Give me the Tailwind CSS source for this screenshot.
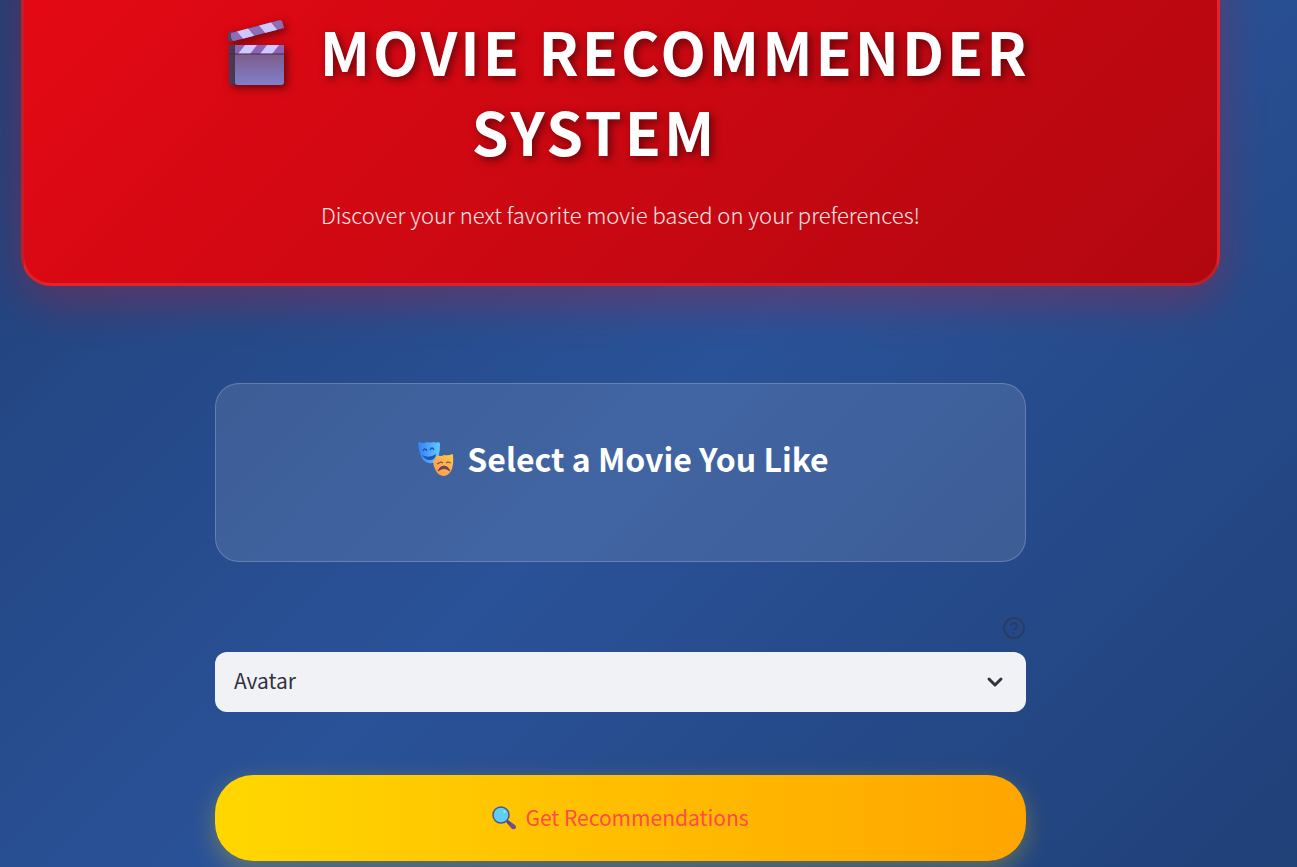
<!DOCTYPE html>
<html lang="en">
<head>
<meta charset="utf-8">
<meta name="viewport" content="width=device-width, initial-scale=1">
<title>Movie Recommender System</title>
<script src="https://cdn.jsdelivr.net/npm/@tailwindcss/browser@4"></script>
</head>
<body class="min-h-screen overflow-hidden bg-[linear-gradient(135deg,#204078_0%,#2a5298_50%,#204078_100%)] font-['Noto_Sans_CJK_SC','Open_Sans',sans-serif]">
<main class="flex min-h-screen flex-col items-center pr-[77px] pl-[21px]">
  <header class="-mt-[60px] w-full rounded-[30px] border-3 border-white/10 bg-[linear-gradient(135deg,#e50914_0%,#b20710_100%)] px-16 pt-[68px] pb-[51px] text-center text-white shadow-[0_15px_45px_rgba(229,9,20,0.3)]">
    <h1 class="mx-auto max-w-[900px] pl-4 text-[59px] leading-[80px] font-bold tracking-[3px] [text-shadow:3px_3px_8px_rgba(0,0,0,0.5)]">
      <svg class="mr-4 inline-block h-[66px] w-[60px] align-[-10px] drop-shadow-[3px_3px_4px_rgba(0,0,0,0.5)]" viewBox="0 0 60 66" aria-hidden="true">
        <defs>
          <linearGradient id="slate" x1="0" y1="0" x2="0" y2="1"><stop offset="0" stop-color="#7e5d8b"/><stop offset="1" stop-color="#7f80cb"/></linearGradient>
          <linearGradient id="side" x1="0" y1="0" x2="1" y2="0"><stop offset="0" stop-color="#4a3c59"/><stop offset="1" stop-color="#4a304b"/></linearGradient>
          <clipPath id="arm"><path d="M4 13 53 0q2 0 3 4l1 4L7 21q-2 0-3-4z"/></clipPath>
        </defs>
        <path d="M1 13q3-3 6-1v9q-4 2-6-1z" fill="#54435f"/>
        <g clip-path="url(#arm)"><path d="M0 0h60v24H0z" fill="#8e6db8"/><path d="m8 9 11-3 10 12-11 3zM30 3l12-3 10 12-12 3z" fill="#cdc6ff"/></g>
        <path d="M2 25h9v40H5q-3-1-3-4z" fill="url(#side)"/>
        <path d="M8 34h49v28q0 3-3 3H11q-3 0-3-3z" fill="url(#slate)"/>
        <path d="M8 25h49v9H8z" fill="#8c63b5"/>
        <path d="m18 25h12l-7 9H11zM40 25h12l-7 9H33z" fill="#d0c8ff"/>
        <path d="M2 34h55" stroke="#432a50"/>
      </svg>
      MOVIE RECOMMENDER <span class="pr-[68px]">SYSTEM</span>
    </h1>
    <p class="mt-[25px] text-[22px] leading-9 font-light text-white/90">Discover your next favorite movie based on your preferences!</p>
  </header>

  <div class="flex w-full max-w-[811px] flex-col">
    <section class="mt-[97px] flex h-[179px] items-start justify-center gap-[13px] rounded-3xl border border-white/20 bg-white/11 pt-[50px] pl-1.5">
      <svg class="mt-[7px] size-9" viewBox="0 0 36 36" aria-hidden="true">
        <defs>
          <linearGradient id="joy" x1="0" y1="0" x2="1" y2="0"><stop offset="0" stop-color="#3480f5"/><stop offset="1" stop-color="#60caff"/></linearGradient>
          <linearGradient id="sad" x1="0" y1="1" x2="1" y2="0"><stop offset="0" stop-color="#ff9353"/><stop offset="1" stop-color="#ffcb45"/></linearGradient>
        </defs>
        <path d="M1 1q4 2 8 0 3 1 6 0 3 1 6 0l1 2q0 12-4 17-3 3-7 2Q5 21 3 15 0 8 0 2z" fill="url(#joy)"/>
        <path d="M5 10q2-4 4 0M12 9q2-4 4 0" fill="none" stroke="#2651ac" stroke-width="1.300"/>
        <path d="M4 14q7 4 14-1-1 6-6 6t-8-5z" fill="#2354ad"/>
        <path d="M19 14q4 2 7 0 5 1 8-1l1 1q1 10-2 16-3 5-8 5-5-1-7-5-3-5-3-10 3-2 4-6z" fill="url(#sad)"/>
        <path d="m19 23 4-2 2 1M28 22l2-1 3 1" fill="none" stroke="#81506b" stroke-width="1.300"/>
        <path d="M20 30q2-5 6-5t6 5q-6-5-12 0z" fill="#704461" stroke="#704461"/>
      </svg>
      <h2 class="text-[32px] leading-[48px] font-bold text-white">Select a Movie You Like</h2>
    </section>

    <div class="mt-[54px] flex justify-end">
      <button type="button" class="text-[#2a3c66]" aria-label="Help">
        <svg class="size-6" viewBox="0 0 24 24" fill="none" stroke="currentColor" stroke-width="2" stroke-linecap="round" stroke-linejoin="round" aria-hidden="true"><circle cx="12" cy="12" r="10"/><path d="M9.090 9a3 3 0 0 1 5.830 1c0 2-3 3-3 3M12 17h.01"/></svg>
      </button>
    </div>
    <div class="relative mt-3">
      <select aria-label="Select a movie" class="h-[60px] w-full appearance-none rounded-xl bg-[#f0f2f6] px-[19px] pb-0.5 text-[21px] text-[#31333f]"><option>Avatar</option></select>
      <svg class="pointer-events-none absolute top-[18px] right-[19px] size-6" viewBox="0 0 24 24" fill="none" stroke="#31333f" stroke-width="3" stroke-linecap="round" stroke-linejoin="round" aria-hidden="true"><path d="m6 9 6 6 6-6"/></svg>
    </div>
    <button type="button" class="mt-[63px] flex h-[86px] w-full items-center justify-center gap-[9px] rounded-[38px] bg-[linear-gradient(90deg,#ffd700,#ffa500)] text-[21px] text-[#ff4b4b] shadow-[0_8px_25px_rgba(255,215,0,0.3)]">
      <svg class="size-6" viewBox="0 0 24 24" aria-hidden="true">
        <path d="m14 16 2-2 7 5q2 2 0 4-2 1-4-1z" fill="#784b91"/><path d="m15 15 3 3" stroke="#534777" stroke-width="2"/>
        <circle cx="9" cy="9" r="8" fill="#62cdf0" stroke="#495795" stroke-width="1.500"/><path d="M11 5q3-1 3 1l-2 1z" fill="#a8e7ff"/>
      </svg>
      <span>Get Recommendations</span>
    </button>
  </div>
</main>
</body>
</html>
